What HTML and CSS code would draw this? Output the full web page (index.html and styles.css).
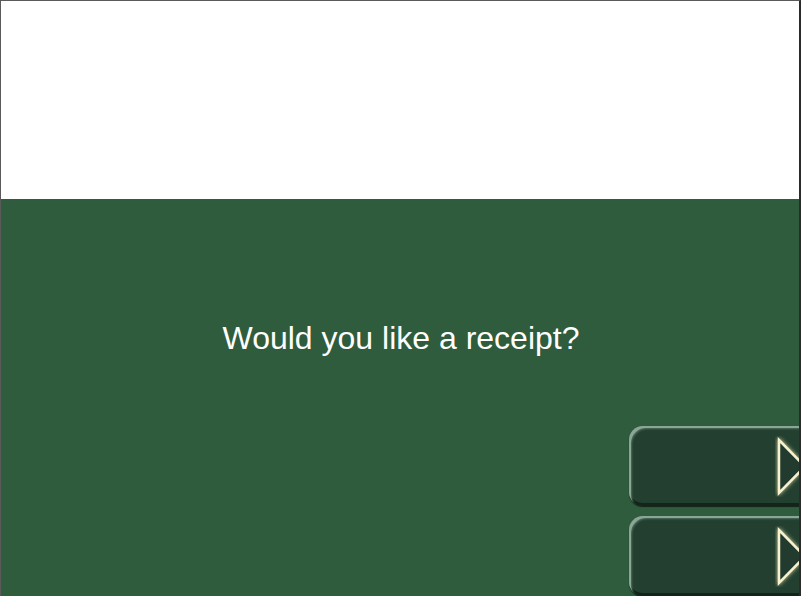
FILE: index.html
```html
<!DOCTYPE html>
<html>
<head>
<meta charset="utf-8">
<link rel="stylesheet" href="styles.css">
<title>Receipt</title>
</head>
<body>
<div class="screen">
  <div class="header"></div>
  <div class="panel">
    <p class="question">Would you like a receipt?</p>
    <div class="choices">
      <div class="choice">
        <svg class="arrow" width="34" height="61" viewBox="0 0 34 61">
          <defs>
            <filter id="glow" x="-50%" y="-50%" width="200%" height="200%">
              <feGaussianBlur in="SourceAlpha" stdDeviation="2" result="b"/>
              <feFlood flood-color="#ece6a6" flood-opacity="0.9"/>
              <feComposite in2="b" operator="in" result="g"/>
              <feMerge><feMergeNode in="g"/><feMergeNode in="SourceGraphic"/></feMerge>
            </filter>
          </defs>
          <polygon points="4,4 30,30.5 4,57" fill="#203b2d" stroke="#f6f2d0" stroke-width="2.5" stroke-linejoin="miter" filter="url(#glow)"/>
        </svg>
      </div>
      <div class="choice">
        <svg class="arrow" width="34" height="61" viewBox="0 0 34 61">
          <polygon points="4,4 30,30.5 4,57" fill="#203b2d" stroke="#f6f2d0" stroke-width="2.5" stroke-linejoin="miter" filter="url(#glow)"/>
        </svg>
      </div>
    </div>
  </div>
</div>
</body>
</html>
```

FILE: styles.css
```css
html, body {
  margin: 0;
  padding: 0;
  background: #2e5c3d;
}
.screen {
  width: 798px;
  height: 595px;
  border-top: 1px solid #5a5a5a;
  border-left: 1px solid #5a5a5a;
  border-right: 2px solid #2b2b2b;
  display: flex;
  flex-direction: column;
  overflow: hidden;
  font-family: "Liberation Sans", Arial, sans-serif;
}
.header {
  height: 198px;
  background: #ffffff;
  flex: none;
}
.panel {
  flex: 1;
  background: #2e5c3d;
  display: flex;
  flex-direction: column;
  overflow: hidden;
}
.question {
  margin: 123px 0 0 0;
  height: 105px;
  color: #ffffff;
  font-size: 32px;
  line-height: 32px;
  text-align: center;
  padding-left: 2px;
}
.choices {
  display: flex;
  flex-direction: column;
  align-items: flex-end;
  gap: 10px;
  margin-right: -12px;
}
.choice {
  width: 182px;
  height: 80px;
  flex: none;
  box-sizing: border-box;
  background: #233f30;
  border-radius: 14px 0 0 14px;
  box-shadow:
    inset 3px 3px 0 -1px #8aa796,
    inset 4px 4px 2px -1px #51705f,
    inset 0 -3px 0 #132419,
    0 1px 1px #122218;
  display: flex;
  align-items: center;
  justify-content: flex-end;
}
.arrow {
  display: block;
  margin-right: 2px;
}
```
